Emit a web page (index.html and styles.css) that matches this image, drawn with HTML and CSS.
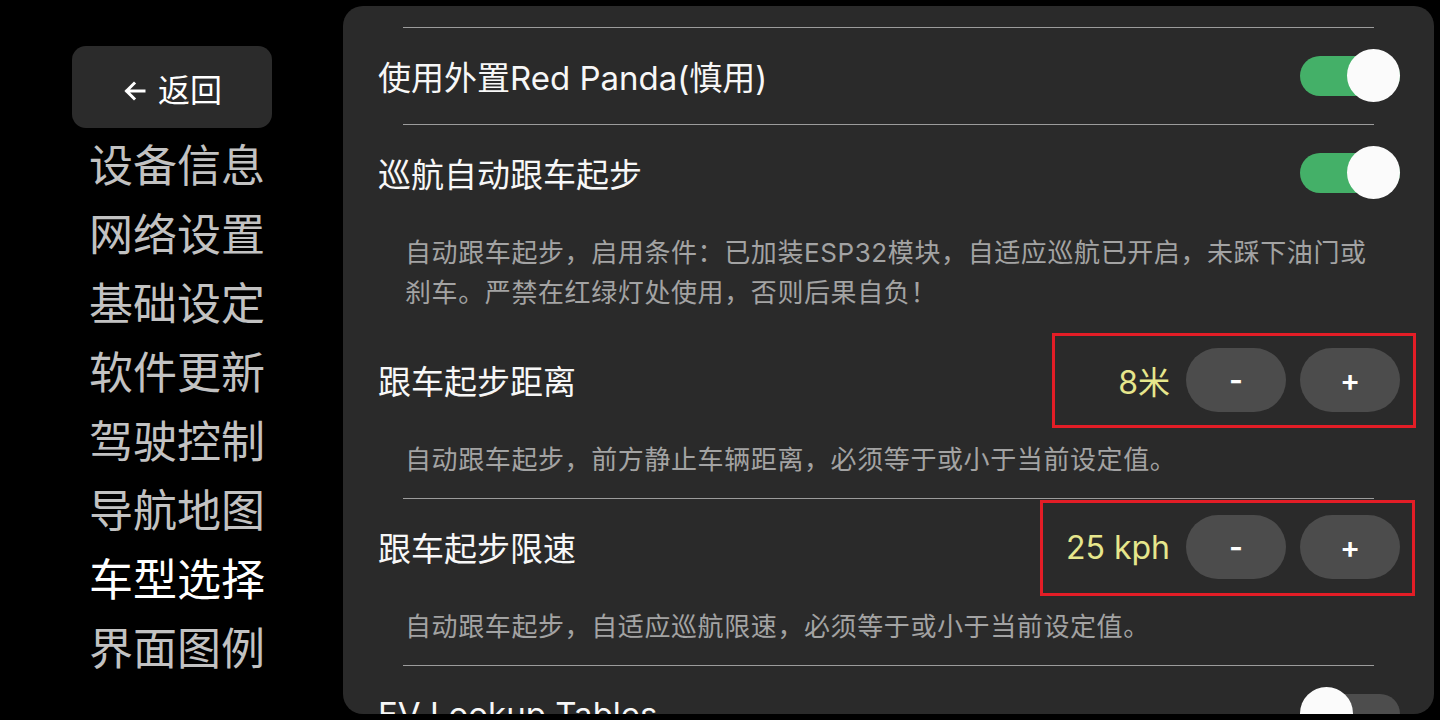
FILE: index.html
```html
<!DOCTYPE html>
<html lang="zh-CN">
<head>
  <meta charset="UTF-8" />
  <meta name="viewport" content="width=device-width, initial-scale=1.0"/>
  <title>车型选择</title>
  <link rel="stylesheet" href="styles.css">
</head>
<body>
  <div class="container">
    <!-- Sidebar -->
    <aside class="sidebar">
      <button class="back">
        <svg width="26" height="26" viewBox="0 0 26 26"><path d="M22 13H5M12 5.5L4.5 13l7.5 7.5" fill="none" stroke="#fff" stroke-width="3" stroke-linecap="square"/></svg>
        <span>返回</span>
      </button>
      <nav class="nav">
        <a>设备信息</a>
        <a>网络设置</a>
        <a>基础设定</a>
        <a>软件更新</a>
        <a>驾驶控制</a>
        <a>导航地图</a>
        <a class="active">车型选择</a>
        <a>界面图例</a>
      </nav>
    </aside>

    <!-- Settings panel -->
    <main class="panel">
      <div class="list">
        <div class="sep"></div>

        <div class="row">
          <span class="title">使用外置Red Panda(慎用)</span>
          <div class="toggle on"><span class="knob"></span></div>
        </div>
        <div class="sep"></div>

        <div class="row">
          <span class="title">巡航自动跟车起步</span>
          <div class="toggle on"><span class="knob"></span></div>
        </div>
        <p class="desc">自动跟车起步，启用条件：已加装ESP32模块，自适应巡航已开启，未踩下油门或刹车。严禁在红绿灯处使用，否则后果自负！</p>
        <div class="sep hidden"></div>

        <div class="row">
          <span class="title">跟车起步距离</span>
          <div class="control">
            <span class="value">8米</span>
            <button class="step">-</button>
            <button class="step">+</button>
          </div>
          <div class="mark mark-dist"></div>
        </div>
        <p class="desc">自动跟车起步，前方静止车辆距离，必须等于或小于当前设定值。</p>
        <div class="sep"></div>

        <div class="row">
          <span class="title">跟车起步限速</span>
          <div class="control">
            <span class="value">25 kph</span>
            <button class="step">-</button>
            <button class="step">+</button>
          </div>
          <div class="mark mark-speed"></div>
        </div>
        <p class="desc">自动跟车起步，自适应巡航限速，必须等于或小于当前设定值。</p>
        <div class="sep"></div>

        <div class="row">
          <span class="title">EV Lookup Tables</span>
          <div class="toggle"><span class="knob"></span></div>
        </div>
      </div>
    </main>
  </div>
</body>
</html>
```

FILE: styles.css
```css
body {
  margin: 0;
  font-family: Inter, 'Noto Sans CJK SC', sans-serif;
  background-color: #000;
  color: #fff;
  overflow: hidden;
}

.container {
  display: flex;
  height: 720px;
}

.sidebar {
  width: 343px;
  flex-shrink: 0;
  padding-top: 46px;
  box-sizing: border-box;
}

.back {
  display: flex;
  align-items: center;
  justify-content: center;
  gap: 10px;
  width: 200px;
  height: 82px;
  margin-left: 72px;
  padding: 7px 0 0 0;
  background-color: #2b2b2b;
  border: none;
  border-radius: 14px;
  color: #fff;
  font-family: inherit;
  font-size: 32px;
}

.back span {
  line-height: 1;
}

.nav {
  margin-top: 4px;
}

.nav a {
  display: block;
  padding-left: 89px;
  font-size: 44px;
  line-height: 69px;
  color: #c2c2c2;
}

.nav a.active {
  color: #fff;
}

.panel {
  flex-grow: 1;
  margin: 6px 6px 6px 0;
  background-color: #2a2a2a;
  border-radius: 20px;
  overflow: hidden;
}

.list {
  padding: 21px 34px 0 35px;
}

.sep {
  height: 1px;
  margin: 0 26px 0 25px;
  background-color: #9c9c9c;
}

.sep.hidden {
  background-color: transparent;
}

.row {
  position: relative;
  display: flex;
  align-items: center;
  justify-content: space-between;
  height: 96px;
}

.title {
  font-size: 33px;
  color: #f7f7f7;
}

.desc {
  margin: 12px 26px 18px 27px;
  font-family: Inter, 'Noto Sans CJK JP', 'Noto Sans CJK SC', sans-serif;
  font-size: 26px;
  line-height: 40px;
  letter-spacing: 0.6px;
  color: #a3a3a3;
}

.toggle {
  position: relative;
  width: 100px;
  height: 40px;
  border-radius: 20px;
  background-color: #4d4d4d;
}

.toggle.on {
  background-color: #44b068;
}

.knob {
  position: absolute;
  top: -7px;
  left: 0;
  width: 53px;
  height: 53px;
  border-radius: 50%;
  background-color: #fbfbfb;
}

.toggle.on .knob {
  left: auto;
  right: 0;
}

.control {
  display: flex;
  align-items: center;
  gap: 14px;
}

.value {
  margin-right: 2px;
  font-size: 32px;
  color: #e6e68c;
}

.step {
  width: 100px;
  height: 64px;
  border: none;
  border-radius: 32px;
  background-color: #4c4c4c;
  color: #fff;
  font-family: inherit;
  font-size: 30px;
  font-weight: 600;
}

/* red annotation boxes */
.mark {
  position: absolute;
  border: 3px solid #e31d26;
  box-sizing: border-box;
}

.mark-dist {
  top: 1px;
  right: -16px;
  width: 364px;
  height: 95px;
}

.mark-speed {
  top: 1px;
  right: -15px;
  width: 375px;
  height: 96px;
}
```
